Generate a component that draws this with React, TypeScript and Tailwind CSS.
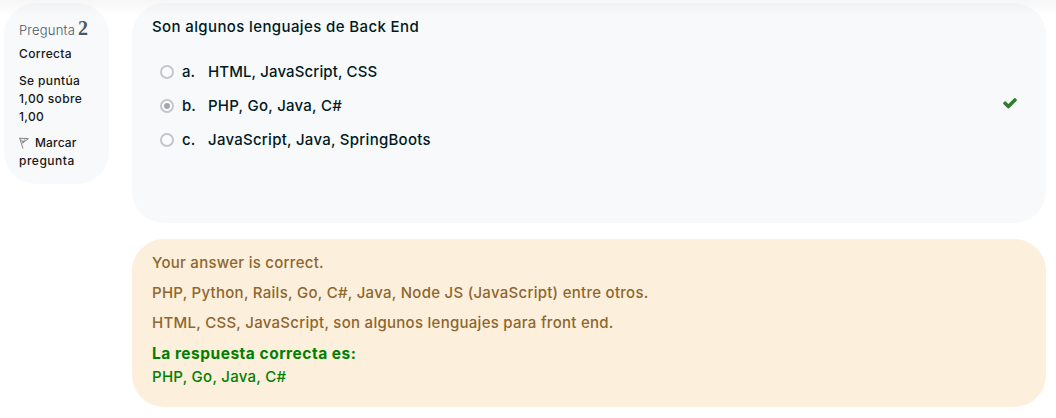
import React from 'react';

type Option = { letter: string; text: string; spacing: string; selected?: boolean };

const options: Option[] = [
  { letter: 'a.', text: 'HTML, JavaScript, CSS', spacing: 'tracking-[0.12px]' },
  { letter: 'b.', text: 'PHP, Go, Java, C#', spacing: 'tracking-[0.25px]', selected: true },
  { letter: 'c.', text: 'JavaScript, Java, SpringBoots', spacing: 'tracking-[0.26px]' },
];

function Radio({ selected }: { selected?: boolean }) {
  return (
    <span className="flex h-[14px] w-[14px] shrink-0 items-center justify-center rounded-full border-2 border-[#c5c5cd] bg-[#fbfbfc]">
      {selected && <span className="h-[6px] w-[6px] rounded-full bg-[#a5a5ae]" />}
    </span>
  );
}

function CheckIcon() {
  return (
    <svg className="mb-[7px] h-4 w-4 shrink-0" viewBox="0 0 1792 1792" fill="#357a32" aria-hidden="true">
      <path d="M1671 566q0 40-28 68l-724 724-136 136q-28 28-68 28t-68-28l-136-136-362-362q-28-28-28-68t28-68l136-136q28-28 68-28t68 28l294 295 656-657q28-28 68-28t68 28l136 136q28 28 28 68z" />
    </svg>
  );
}

function FlagIcon() {
  return (
    <svg className="mr-[6px] inline-block h-3 w-[10px] align-[-2px]" viewBox="0 0 10 12" fill="none" stroke="#777" strokeWidth="0.9" aria-hidden="true">
      <path d="M.6.8 4 11.6M.8 1.2 9.4 1.7 3.2 6.3M2.4 2.6 4 5.6 5.8 2.4" />
    </svg>
  );
}

export default function App() {
  return (
    <div className="relative flex h-[418px] w-[1056px] items-start overflow-hidden bg-white pt-[3px] pl-1 font-['Inter',sans-serif] font-medium">
      <aside className="h-[181px] w-[105px] shrink-0 rounded-[32px] bg-[#f8f9fb] pt-[15px] pl-[15px] text-[12px] leading-[18px] tracking-[0.35px] text-[#171717]">
        <h3 className="flex h-[20px] items-baseline gap-1 leading-[20px] text-[#495867]">
          <span className="text-[13px] font-light tracking-[0.2px]">Pregunta</span>
          <span className="-ml-[1px] font-['Liberation_Serif',serif] text-[20px] font-bold">2</span>
        </h3>
        <div className="mt-[7px]">Correcta</div>
        <div className="mt-[9px]">Se puntúa<br />1,00 sobre<br />1,00</div>
        <div className="mt-[8px]"><FlagIcon /><span className="tracking-[0.15px]">Marcar</span><br /><span className="tracking-[0.5px]">pregunta</span></div>
      </aside>
      <main className="ml-[23px] flex w-[914px] flex-col gap-4 text-[15px]">
        <section className="h-[220px] rounded-[32px] bg-[#f8f9fb] pt-[12px] pr-[28px] pl-5 text-[#001a1e]">
          <p className="leading-6 tracking-[0.38px]">Son algunos lenguajes de Back End</p>
          <div className="mt-[16px] pl-2">
            {options.map((o) => (
              <div key={o.letter} className="flex h-[34px] items-center">
                <Radio selected={o.selected} />
                <span className="ml-2 w-[26px]">{o.letter}</span>
                <span className={`grow ${o.spacing}`}>{o.text}</span>
                {o.selected && <CheckIcon />}
              </div>
            ))}
          </div>
        </section>
        <section className="h-[168px] rounded-[32px] bg-[#fcefdc] pt-[12px] pl-5 leading-6 tracking-[0.27px] text-[#8e662e]">
          <p className="mb-[6px]">Your answer is correct.</p>
          <p className="mb-[6px]">PHP, Python, Rails, Go, C#, Java, Node JS (JavaScript) entre otros.</p>
          <p className="mb-[7px]">HTML, CSS, JavaScript, son algunos lenguajes para front end.</p>
          <p className="text-[15.5px] leading-[23px] font-bold tracking-[0.5px] text-[#008000]">La respuesta correcta es:</p>
          <p className="text-[#008000]">PHP, Go, Java, C#</p>
        </section>
      </main>
      <div className="pointer-events-none absolute inset-x-0 top-0 h-4 bg-linear-to-b from-black/[0.035] to-transparent" />
    </div>
  );
}
